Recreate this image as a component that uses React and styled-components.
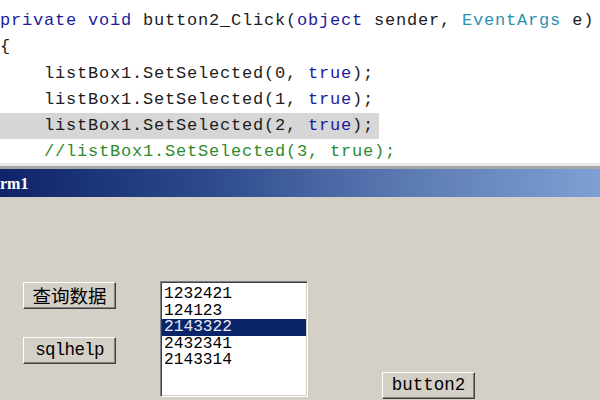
import React from 'react'
import styled, { createGlobalStyle } from 'styled-components'

const GlobalStyle = createGlobalStyle`
  html, body {
    margin: 0;
    padding: 0;
    width: 600px;
    height: 400px;
    overflow: hidden;
    background: #d4d0c8;
  }
`

const Screen = styled.div`
  width: 600px;
  height: 400px;
  display: flex;
  flex-direction: column;
  overflow: hidden;
`

// code editor part
const Editor = styled.pre`
  margin: 0;
  height: 166px;
  padding-top: 8px;
  box-sizing: border-box;
  background: #ffffff;
  font-family: "Liberation Mono", "DejaVu Sans Mono", monospace;
  font-size: 17px;
  letter-spacing: 0.8px;
  color: #1c1c1c;
  white-space: pre;
  overflow: hidden;
  border-bottom: 3px solid #ebebeb;
  flex-shrink: 0;
`

const Line = styled.div`
  height: 26.3px;
  line-height: 26.3px;
  width: ${({ $highlight }) => ($highlight ? 'fit-content' : 'auto')};
  padding-right: ${({ $highlight }) => ($highlight ? '5px' : '0')};
  background: ${({ $highlight }) => ($highlight ? '#d6d6d6' : 'transparent')};
`

const Kw = styled.span`
  color: #1c1c9c;
`

const Type = styled.span`
  color: #2b91af;
`

const Comment = styled.span`
  color: #2e8b2e;
`

const Divider = styled.div`
  height: 3px;
  background: #a6a6a6;
  flex-shrink: 0;
`

// form window
const TitleBar = styled.div`
  height: 28px;
  flex-shrink: 0;
  display: flex;
  align-items: center;
  padding-top: 2px;
  box-sizing: border-box;
  background: linear-gradient(90deg, #0e2468 0%, #2d4b8c 35%, #5877b0 65%, #7ea0d3 100%);
  color: #ffffff;
  font-family: "Liberation Serif", serif;
  font-weight: bold;
  font-size: 16px;
`

const FormBody = styled.div`
  flex: 1;
  background: #d4d0c8;
  display: flex;
  align-items: flex-start;
  padding: 85px 0 0 23px;
  overflow: hidden;
`

const ButtonColumn = styled.div`
  display: flex;
  flex-direction: column;
  gap: 28px;
`

const WinButton = styled.button`
  box-sizing: border-box;
  width: ${({ $w }) => $w || 93}px;
  height: 27px;
  padding: 0;
  margin-top: ${({ $top }) => $top || 0}px;
  margin-left: ${({ $left }) => $left || 0}px;
  background: #d4d0c8;
  border: 1px solid;
  border-color: #ffffff #404040 #404040 #ffffff;
  box-shadow: inset -1px -1px 0 #808080;
  color: #000000;
  font-family: ${({ $cjk }) =>
    $cjk
      ? '"Noto Sans CJK SC", "Noto Sans", sans-serif'
      : '"Liberation Mono", "DejaVu Sans Mono", monospace'};
  font-size: ${({ $cjk }) => ($cjk ? '18.5px' : '17.5px')};
  letter-spacing: ${({ $cjk, $spaced }) => ($cjk ? '0' : $spaced ? '0' : '-0.7px')};
  line-height: 1;
  display: flex;
  align-items: center;
  justify-content: center;
`

const ListBox = styled.div`
  box-sizing: border-box;
  width: 148px;
  height: 116px;
  margin-left: 44px;
  margin-top: -1px;
  padding-top: 4px;
  background: #ffffff;
  border: 1px solid;
  border-color: #808080 #ffffff #ffffff #808080;
  box-shadow: inset 1px 1px 0 #404040, inset -1px -1px 0 #d4d0c8;
  display: flex;
  flex-direction: column;
`

const ListItem = styled.div`
  height: 16.5px;
  line-height: 16.5px;
  margin: 0 1px;
  padding-left: 2px;
  font-family: "Liberation Mono", "DejaVu Sans Mono", monospace;
  font-size: 16.2px;
  color: ${({ $selected }) => ($selected ? '#eceaf4' : '#000000')};
  background: ${({ $selected }) => ($selected ? '#0a246a' : 'transparent')};
`

const items = ['1232421', '124123', '2143322', '2432341', '2143314']

export default function App() {
  return (
    <>
      <GlobalStyle />
      <Screen>
        <Editor>
          <Line>
            <Kw>private</Kw> <Kw>void</Kw> button2_Click(<Kw>object</Kw> sender, <Type>EventArgs</Type> e)
          </Line>
          <Line>{'{'}</Line>
          <Line>    listBox1.SetSelected(0, <Kw>true</Kw>);</Line>
          <Line>    listBox1.SetSelected(1, <Kw>true</Kw>);</Line>
          <Line $highlight>    listBox1.SetSelected(2, <Kw>true</Kw>);</Line>
          <Line>
            <Comment>    //listBox1.SetSelected(3, true);</Comment>
          </Line>
        </Editor>
        <Divider />
        <TitleBar>rm1</TitleBar>
        <FormBody>
          <ButtonColumn>
            <WinButton $cjk>查询数据</WinButton>
            <WinButton>sqlhelp</WinButton>
          </ButtonColumn>
          <ListBox>
            {items.map((item, i) => (
              <ListItem key={item} $selected={i === 2}>
                {item}
              </ListItem>
            ))}
          </ListBox>
          <WinButton $top={90} $left={74} $spaced>
            button2
          </WinButton>
        </FormBody>
      </Screen>
    </>
  )
}
